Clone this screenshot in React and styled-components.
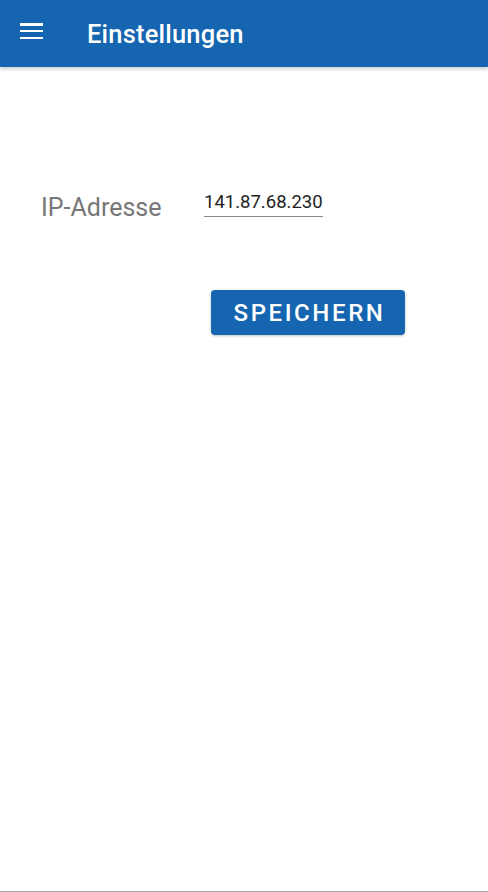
import styled, { createGlobalStyle } from "styled-components";

const Global = createGlobalStyle`
  html, body { margin: 0; padding: 0; background: #fff; }
  body { font-family: Roboto, "Noto Sans", sans-serif; }
`;

const Screen = styled.div`
  width: 488px;
  height: 892px;
  display: flex;
  flex-direction: column;
  border-bottom: 1px solid #a8a8a8;
  box-sizing: border-box;
  overflow: hidden;
`;

const AppBar = styled.div`
  height: 67px;
  background: #1565b0;
  display: flex;
  align-items: center;
  padding-left: 20px;
  box-shadow: 0 2px 4px rgba(0, 0, 0, 0.2);
  flex-shrink: 0;
`;

const MenuButton = styled.div`
  width: 23px;
  height: 16px;
  display: flex;
  flex-direction: column;
  justify-content: space-between;
  margin-top: -5px;
  span {
    display: block;
    height: 2.5px;
    background: #fff;
  }
`;

const Title = styled.h1`
  margin: 0 0 0 44px;
  color: #fff;
  font-size: 25.5px;
  font-weight: 500;
  letter-spacing: 0.2px;
`;

const Content = styled.div`
  display: flex;
  flex-direction: column;
  padding-top: 126px;
`;

const FieldRow = styled.div`
  display: flex;
  align-items: center;
  padding-left: 41px;
`;

const Label = styled.label`
  font-size: 25px;
  color: #777;
  width: 163px;
`;

const Input = styled.input`
  width: 119px;
  border: none;
  border-bottom: 1px solid #888;
  outline: none;
  padding: 1px 0 3px;
  font-family: Roboto, sans-serif;
  font-size: 18.5px;
  color: #222;
  background: transparent;
  margin-top: -8px;
`;

const SaveButton = styled.button`
  align-self: flex-start;
  margin: 68px 0 0 211px;
  width: 194px;
  height: 45px;
  background: #1565b0;
  color: #fff;
  border: none;
  border-radius: 4px;
  font-family: Roboto, sans-serif;
  font-size: 24px;
  font-weight: 500;
  letter-spacing: 2.6px;
  padding: 0 0 0 3px;
  box-shadow: 0 1px 3px rgba(0, 0, 0, 0.25);
`;

export default function App() {
  return (
    <Screen>
      <Global />
      <AppBar>
        <MenuButton>
          <span />
          <span />
          <span />
        </MenuButton>
        <Title>Einstellungen</Title>
      </AppBar>
      <Content>
        <FieldRow>
          <Label>IP-Adresse</Label>
          <Input defaultValue="141.87.68.230" />
        </FieldRow>
        <SaveButton>SPEICHERN</SaveButton>
      </Content>
    </Screen>
  );
}
